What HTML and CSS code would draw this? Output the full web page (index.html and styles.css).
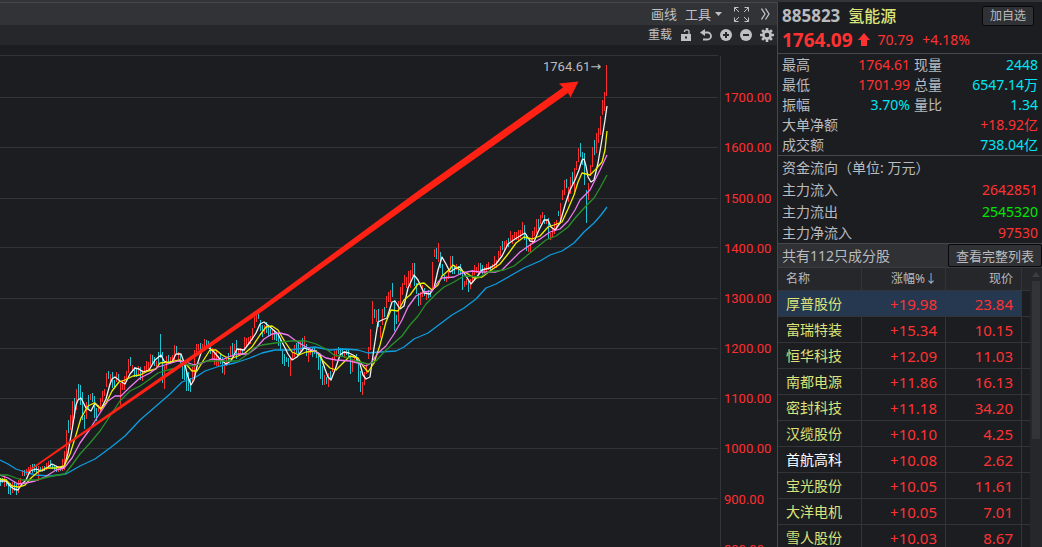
FILE: index.html
```html
<!DOCTYPE html>
<html lang="zh-CN">
<head>
<meta charset="utf-8">
<title>氢能源 885823</title>
<link rel="stylesheet" href="styles.css">
</head>
<body>
<div class="app">
<main class="main">
  <div class="toolbar toolbar-top">
    <button class="tool">画线</button>
    <button class="tool tool-menu">工具<svg width="7" height="4" viewBox="0 0 7 4"><path d="M0 0H7L3.5 4Z" fill="currentColor"/></svg></button>
    <button class="tool" aria-label="全屏"><svg width="15" height="15" viewBox="0 0 15 15" fill="none" stroke="currentColor"><path d="M.5 4.500V.5H4.500M.5.5L5 5M10.500.5H14.500V4.500M14.500.5L10 5M.5 10.500V14.500H4.500M.5 14.500L5 10M10.500 14.500H14.500V10.500M14.500 14.500L10 10"/></svg></button>
    <button class="tool" aria-label="更多"><svg width="9" height="12" viewBox="0 0 9 12" fill="none" stroke="currentColor" stroke-width="1.300"><path d="M.5.5L4 6L.5 11.500M4.500.5L8 6L4.500 11.500"/></svg></button>
  </div>
  <div class="toolbar toolbar-sub">
    <button class="tool reload">重载</button>
    <button class="tool" aria-label="锁定"><svg width="12" height="12" viewBox="0 0 12 12"><path d="M4.500 3V2.500Q4.500.8 6.800.8T9 2.500V5" fill="none" stroke="currentColor" stroke-width="1.300"/><path fill="currentColor" fill-rule="evenodd" d="M1 5H11V12H1ZM5 7.500V9.500H7V7.500Z"/></svg></button>
    <button class="tool" aria-label="撤销"><svg width="12" height="12" viewBox="0 0 12 12"><path d="M3 3.500H7.500A3.500 3.500 0 0 1 7.500 10.500H3" fill="none" stroke="currentColor" stroke-width="1.800"/><path fill="currentColor" d="M0 3.500L5 0V7Z"/></svg></button>
    <button class="tool" aria-label="放大"><svg width="12" height="12" viewBox="0 0 12 12"><circle cx="6" cy="6" r="6" fill="currentColor"/><path d="M3 6H9M6 3V9" stroke="#26272b" stroke-width="2"/></svg></button>
    <button class="tool" aria-label="缩小"><svg width="12" height="12" viewBox="0 0 12 12"><circle cx="6" cy="6" r="6" fill="currentColor"/><path d="M3 6H9" stroke="#26272b" stroke-width="2"/></svg></button>
    <button class="tool" aria-label="设置"><svg width="14" height="14" viewBox="0 0 14 14"><circle cx="7" cy="7" r="3.600" fill="none" stroke="currentColor" stroke-width="2.600"/><path d="M7 0V3M7 11V14M0 7H3M11 7H14M2.100 2.100L4 4M10 10L11.900 11.900M2.100 11.900L4 10M10 4L11.900 2.100" stroke="currentColor" stroke-width="2.600"/></svg></button>
  </div>
  <svg class="chart" viewBox="0 45 777 502" preserveAspectRatio="xMinYMin slice" role="img" aria-label="氢能源指数K线图">
    <path class="grid" d="M0 55.500H718M0 97.500H718M0 147.500H718M0 198.500H718M0 247.500H718M0 298.500H718M0 348.500H718M0 398.500H718M0 448.500H718M0 498.500H718M720.500 56V547"/>
    <path id="up" class="bars up"/>
    <path id="down" class="bars down"/>
    <polyline class="line ma60" points="0,460 8,464 16,469 28,473 36,475 50,476 66,474 80,466 95,459 110,448 125,436 140,420 155,407 170,394 182,382 196,377 205,371 220,366 235,363 250,358 262,353 275,350 290,350 305,348 315,347 330,350 345,349 358,350 368,353 380,352 396,351 404,347 414,339 428,333 440,324 452,315 464,308 476,299 486,288 496,284 510,276 524,268 540,261 550,255 562,251 574,243 584,232 594,223 601,215 607,207"/>
    <polyline class="line ma5" points="0,481 6,481 10,486 14,489 18,490 22,484 26,480 30,471 36,469 42,471 48,467 52,464 56,466 60,468 64,467 68,453 72,430 76,405 78,400 81,398 86,408 91,411 95,403 101,409 106,399 110,384 112,379 115,377 120,381 125,384 130,374 135,368 139,369 143,372 149,370 155,360 161,355 164,361 168,363 172,362 176,354 181,354 185,365 188,377 191,385 194,380 198,362 202,350 208,347 214,352 219,358 226,364 231,361 237,349 244,350 250,342 256,333 260,324 264,322 270,327 278,334 282,342 288,354 292,360 297,357 304,348 310,350 315,351 320,354 325,369 328,377 331,380 335,370 340,355 344,352 349,353 355,356 360,364 363,375 366,379 370,377 374,348 378,322 382,320 387,318 392,302 395,301 400,309 404,306 408,288 414,275 418,280 424,293 430,294 434,288 438,270 442,257 446,264 450,272 456,268 460,267 466,276 471,284 476,278 482,270 490,268 496,264 502,256 508,244 515,239 525,233 530,241 534,242 538,232 544,220 548,220 551,227 555,230 560,223 565,205 570,190 575,180 579,170 582,160 584,159 586,166 588,177 591,182 594,180 598,163 602,139 605,120 607,106"/>
    <polyline class="line ma10" points="0,479 6,480 12,486 18,487 25,485 31,478 38,472 46,468 56,468 64,466 70,454 76,435 81,418 88,406 94,403 101,409 106,403 112,391 119,382 125,380 133,376 140,375 148,371 156,369 160,363 170,362 180,360 186,364 192,371 197,371 203,361 210,350 216,350 222,355 230,359 238,356 245,353 252,347 260,335 266,327 272,326 278,330 285,342 292,352 299,355 306,352 316,351 323,361 330,368 336,370 343,363 350,356 358,358 363,366 368,372 374,363 380,345 386,322 391,310 398,311 404,300 410,295 418,284 424,283 432,290 438,285 442,276 450,269 453,265 460,270 468,274 474,278 482,277 490,271 500,264 508,254 516,243 524,237 532,239 540,236 548,227 554,225 562,222 568,209 574,195 578,182 582,173 590,175 596,169 602,162 605,150 607,131"/>
    <polyline class="line ma20" points="0,475 8,478 18,484 26,483 35,481 45,477 56,470 64,468 72,458 80,443 90,429 98,416 108,401 115,396 121,396 130,387 140,378 150,373 158,367 168,364 178,361 186,362 194,365 202,363 212,359 222,360 228,357 238,354 248,354 256,348 264,339 272,334 280,333 288,335 296,341 306,347 316,352 326,358 336,360 350,361 358,363 366,366 371,363 378,353 386,346 394,334 402,320 408,307 416,296 424,292 432,291 438,282 442,278 454,277 462,273 472,271 480,272 496,272 502,270 510,262 520,252 530,245 540,239 550,232 560,229 568,221 575,210 580,200 590,190 600,170 607,155"/>
    <polyline class="line ma30" points="0,475 8,475 16,478 22,480 36,480 48,477 58,475 65,474 72,465 80,454 90,443 100,431 110,416 120,401 130,391 140,386 150,379 158,373 164,371 176,368 184,364 194,366 206,361 222,361 238,361 248,354 254,348 262,345 275,343 290,341 306,341 316,344 326,349 334,355 346,357 356,361 368,364 376,361 384,352 394,343 402,336 410,325 418,316 426,304 436,294 444,287 454,282 464,276 480,277 488,272 504,270 514,266 524,258 536,248 546,240 556,236 568,227 576,217 586,206 594,198 600,188 607,175"/>
    <path class="arrow" d="M27 471L260 307.500L420 189.500L563 87.500L559 83.500L578.500 81.500L570.500 97.500L568 93L420 197.500L260 313L27 473Z"/>
    <text class="peak" x="543" y="71">1764.61<tspan class="pointer">→</tspan></text>
    <g class="axis">
      <text x="724" y="102">1700.00</text><text x="724" y="152">1600.00</text><text x="724" y="203">1500.00</text><text x="724" y="253">1400.00</text><text x="724" y="303">1300.00</text><text x="724" y="353">1200.00</text><text x="724" y="403">1100.00</text><text x="724" y="453">1000.00</text><text x="724" y="504">900.00</text><text x="724" y="554">800.00</text>
    </g>
  </svg>
</main>
<aside class="side">
  <header class="quote">
    <div class="quote-head"><span class="code">885823</span><h1 class="name">氢能源</h1><button class="btn add">加自选</button></div>
    <div class="quote-price"><strong class="price">1764.09</strong><svg width="12" height="13" viewBox="0 0 12 13"><path fill="#ff3232" d="M6 0L12 7H9V13H3V7H0Z"/></svg><span>70.79</span><span class="change">+4.18%</span></div>
  </header>
  <dl class="stats">
    <div><dt>最高</dt><dd class="red">1764.61</dd></div><div><dt>现量</dt><dd class="cyan">2448</dd></div>
    <div><dt>最低</dt><dd class="red">1701.99</dd></div><div><dt>总量</dt><dd class="cyan">6547.14万</dd></div>
    <div><dt>振幅</dt><dd class="cyan">3.70%</dd></div><div><dt>量比</dt><dd class="cyan">1.34</dd></div>
    <div class="wide"><dt>大单净额</dt><dd class="red">+18.92亿</dd></div>
    <div class="wide"><dt>成交额</dt><dd class="cyan">738.04亿</dd></div>
  </dl>
  <section class="flow">
    <h2>资金流向（单位: 万元）</h2>
    <dl>
      <div><dt>主力流入</dt><dd class="red">2642851</dd></div>
      <div><dt>主力流出</dt><dd class="green">2545320</dd></div>
      <div><dt>主力净流入</dt><dd class="red">97530</dd></div>
    </dl>
  </section>
  <div class="members"><span>共有112只成分股</span><button class="btn all">查看完整列表</button></div>
  <div class="list">
    <table>
      <colgroup><col class="c-name"><col class="c-pct"><col class="c-price"><col class="c-rest"></colgroup>
      <thead><tr><th>名称</th><th>涨幅%↓</th><th>现价</th><th></th></tr></thead>
      <tbody>
        <tr class="selected"><td>厚普股份</td><td>+19.98</td><td>23.84</td><td></td></tr>
        <tr><td>富瑞特装</td><td>+15.34</td><td>10.15</td><td></td></tr>
        <tr><td>恒华科技</td><td>+12.09</td><td>11.03</td><td></td></tr>
        <tr><td>南都电源</td><td>+11.86</td><td>16.13</td><td></td></tr>
        <tr><td>密封科技</td><td>+11.18</td><td>34.20</td><td></td></tr>
        <tr><td>汉缆股份</td><td>+10.10</td><td>4.25</td><td></td></tr>
        <tr class="plain"><td>首航高科</td><td>+10.08</td><td>2.62</td><td></td></tr>
        <tr><td>宝光股份</td><td>+10.05</td><td>11.61</td><td></td></tr>
        <tr><td>大洋电机</td><td>+10.05</td><td>7.01</td><td></td></tr>
        <tr><td>雪人股份</td><td>+10.03</td><td>8.67</td><td></td></tr>
      </tbody>
    </table>
    <div class="scroll"><svg width="8" height="5" viewBox="0 0 8 5"><path fill="#3d3e42" d="M4 0L8 5H0Z"/></svg><div class="thumb"></div></div>
  </div>
</aside>
</div>
<script src="chart.js"></script>
</body>
</html>
```

FILE: styles.css
```css
* { box-sizing: border-box; }
body {
  margin: 0;
  background: #1c1d21;
  color: #b9bbbf;
  font: 14px/20px "Noto Sans", "Noto Sans CJK SC", sans-serif;
}
button { font-family: inherit; color: inherit; cursor: pointer; }
h1, h2, dl, dd { margin: 0; font-weight: 400; }
.red { color: #ff3232; }
.cyan { color: #00e6f6; }
.green { color: #00e600; }

.app {
  display: flex;
  height: 100vh;
  overflow: hidden;
  border-top: 2px solid #333438;
}
.main { flex: 1; min-width: 0; display: flex; flex-direction: column; }
.toolbar { display: flex; justify-content: flex-end; align-items: center; }
.toolbar-top {
  height: 23px;
  gap: 8px;
  padding-right: 7px;
  border-top: 1px solid #46474b;
  background: #323337;
}
.toolbar-sub { height: 20px; gap: 8px; padding-right: 3px; background: #26272b; }
.tool {
  display: flex;
  align-items: center;
  gap: 4px;
  padding: 0;
  border: 0;
  background: none;
  font-size: 13px;
  line-height: 20px;
  color: #bfc0c3;
}
.tool-menu { margin-right: 4px; }
.toolbar-top .tool:last-child { margin-left: 4px; }
.reload { font-size: 12px; }

.chart { flex: 1; min-height: 0; width: 100%; display: block; }
.grid { stroke: #333438; fill: none; }
.bars { stroke-width: 1; fill: none; shape-rendering: crispEdges; }
.up { stroke: #ff2e2e; }
.down { stroke: #1fc4d0; }
.line { fill: none; stroke-width: 1.3; stroke-linejoin: round; }
.ma5 { stroke: #f2f2f2; }
.ma10 { stroke: #eeee00; }
.ma20 { stroke: #f07cf0; }
.ma30 { stroke: #289028; }
.ma60 { stroke: #0c9ee0; }
.arrow { fill: #ff2114; }
.peak, .axis { font-family: Roboto, "Noto Sans", sans-serif; font-size: 13px; }
.peak { fill: #b9bbbf; }
.pointer { font-family: "DejaVu Sans", sans-serif; }
.axis { fill: #ff2e2e; }

.side {
  flex: 0 0 265px;
  display: flex;
  flex-direction: column;
  min-height: 0;
  border-left: 1px solid #46474b;
}
.quote { padding: 2px 4px 1px; border-bottom: 1px solid #46474b; }
.quote-head { display: flex; align-items: center; gap: 8px; height: 23px; }
.code { font-size: 17px; font-weight: 700; }
.name { font-size: 16px; font-weight: 500; color: #dbe37a; }
.btn {
  border: 1px solid #08080a;
  border-radius: 2px;
  background: #303135;
  padding: 0;
}
.add { margin: 0 4px 0 auto; width: 52px; height: 20px; font-size: 12px; line-height: 18px; }
.quote-price { display: flex; align-items: center; height: 25px; color: #ff3232; }
.price { font-size: 19px; margin-right: 5px; }
.quote-price svg { margin-right: 8px; }
.change { margin-left: 9px; }
.stats {
  display: grid;
  grid-template-columns: 128fr 124fr;
  column-gap: 4px;
  padding: 1px 4px 0;
  border-bottom: 1px solid #46474b;
}
.stats div, .flow dl div { display: flex; justify-content: space-between; }
.stats .wide { grid-column: 1 / -1; }
.flow { padding: 1px 4px 0; line-height: 22px; }
.flow h2 { font-size: 14px; line-height: 22px; }
.flow dl div:last-child { line-height: 20px; }
.members {
  display: flex;
  align-items: center;
  justify-content: space-between;
  height: 25px;
  padding: 0 0 0 4px;
  border-top: 1px solid #46474b;
  border-bottom: 1px solid #3a3b3f;
  background: #303135;
}
.all { width: 94px; height: 23px; font-size: 13px; line-height: 20px; }
.list { flex: 1; min-height: 0; display: flex; overflow: hidden; }
table {
  flex: 1;
  height: max-content;
  border-collapse: separate;
  border-spacing: 0;
  table-layout: fixed;
}
.c-name, .c-pct { width: 84px; }
.c-price { width: 76px; }
th, td {
  padding: 0 8px;
  text-align: right;
  border-right: 1px solid #333438;
  border-bottom: 1px solid #333438;
}
th:first-child, td:first-child { text-align: left; }
th:last-child, td:last-child { padding: 0; border-right: 0; }
th { height: 23px; font-size: 12px; font-weight: 400; background: #26272b; }
td { height: 26px; font-size: 15px; color: #ff3232; }
td:first-child { font-size: 14px; color: #dbe37a; }
.plain td:first-child { color: #fff; }
.selected td:not(:last-child) { background: #263850; }
.scroll {
  flex: 0 0 12px;
  display: flex;
  flex-direction: column;
  align-items: center;
  gap: 4px;
  padding-top: 4px;
  background: #26272b;
}
.thumb { width: 8px; height: 158px; background: #333438; }
```

FILE: chart.js
```js
// Daily ranges: one bar every 2 units, each "u" (up) or "d" (down) with its top and bottom.
const bars = `d478-486 d478-483 u477-487 d479-486 d482-494 d483-495 u482-493 d481-491 d484-495 u480-493
u478-484 u470-476 d470-476 u469-475 u467-474 u465-473 d464-473 d464-472 d466-473 u466-481
d467-472 u466-471 d466-471 u463-470 u461-468 d460-467 d464-469 d465-470 d466-472 u466-472
d466-471 u459-471 u451-470 u430-456 d420-433 u415-430 u401-425 d398-418 u389-410 d384-400
d385-405 d392-420 d415-429 u402-419 d395-409 u394-400 d393-402 d396-418 d408-421 u405-412
u398-412 u391-402 u389-396 u373-387 d371-379 u374-385 d372-388 d380-388 u372-382 d374-380
u383-405 u380-390 u376-390 u371-379 u359-373 d357-366 u365-372 d367-377 d368-377 u366-375
d367-380 u370-381 u366-372 u361-372 u362-370 u354-366 d355-364 d357-366 u361-367 d352-365
d334-358 d352-383 u366-389 u356-369 d355-362 u357-364 u355-363 u345-360 d346-353 u352-360
d354-366 d362-379 d362-380 d370-391 d372-391 d378-392 u367-382 u350-377 u344-352 u344-350
d343-352 u344-349 u339-350 d340-348 d341-348 d346-354 u348-360 u354-365 u350-366 u356-366
d353-364 d357-373 u364-375 u358-366 d353-361 u346-357 d343-356 u344-352 d340-359 u349-355
u348-354 d350-355 u337-351 u338-346 u337-345 u336-344 u328-340 u317-328 u315-322 d311-319
d320-331 d325-337 u325-334 d322-333 d325-337 d329-336 u330-340 d330-340 d332-341 d335-346
d340-351 d349-364 d354-366 d357-362 d358-367 u358-376 u352-360 u345-357 d343-353 d341-356
u341-351 d338-350 u336-348 d344-356 u347-362 u349-355 d347-357 d347-354 d350-358 d354-370
d358-379 d366-385 u375-385 d377-384 u373-387 d371-380 u357-372 u351-360 u350-357 d347-354
d348-356 d348-357 u351-358 d349-355 d350-358 d356-374 u360-372 u355-363 d354-363 d362-382
d371-392 u382-395 u372-385 u363-374 u347-359 u329-350 u301-324 d309-318 u310-322 d309-327
u326-338 u309-325 d307-317 u296-308 u292-302 u290-302 d283-297 d300-331 d315-324 u301-322
u287-308 u283-295 u275-285 u277-288 u271-285 u270-288 u263-276 d263-286 d283-294 d293-306
u292-305 u285-297 d288-296 u291-300 d290-298 d291-297 u262-291 u249-257 d248-259 u243-262
d252-268 d264-276 d275-281 u276-282 u268-279 u256-270 d256-274 d265-274 u264-270 d266-274
d264-275 d272-290 u281-287 u279-285 d281-292 u279-289 u270-282 u265-275 u267-273 u263-275
d263-272 d265-274 u267-274 u264-272 u262-270 d266-271 u264-270 u256-268 u260-268 u251-262
u246-256 d241-250 u241-250 u240-248 d238-247 u231-241 u235-244 u232-238 u232-240 u230-241
u230-238 u222-235 d225-240 d234-251 u247-252 u243-253 u231-243 u227-236 u219-233 d219-229
u215-224 u212-218 d215-224 u219-224 d218-239 u233-240 u229-238 u222-234 u220-230 d211-216
u203-224 u190-200 u180-195 d179-188 u187-202 u177-194 d172-184 u168-192 u161-170 u148-162
d143-157 d152-165 d153-185 d190-223 u183-200 u165-176 u147-167 d140-155 u133-153 u128-143
u116-135 u100-115 u92-111 u65-96`.split(/\s+/);

const paths = { u: "", d: "" };
bars.forEach((bar, i) => {
  const [top, bottom] = bar.slice(1).split("-");
  paths[bar[0]] += `M${i * 2 + 0.5} ${top}V${bottom}`;
});
document.getElementById("up").setAttribute("d", paths.u);
document.getElementById("down").setAttribute("d", paths.d);
```
